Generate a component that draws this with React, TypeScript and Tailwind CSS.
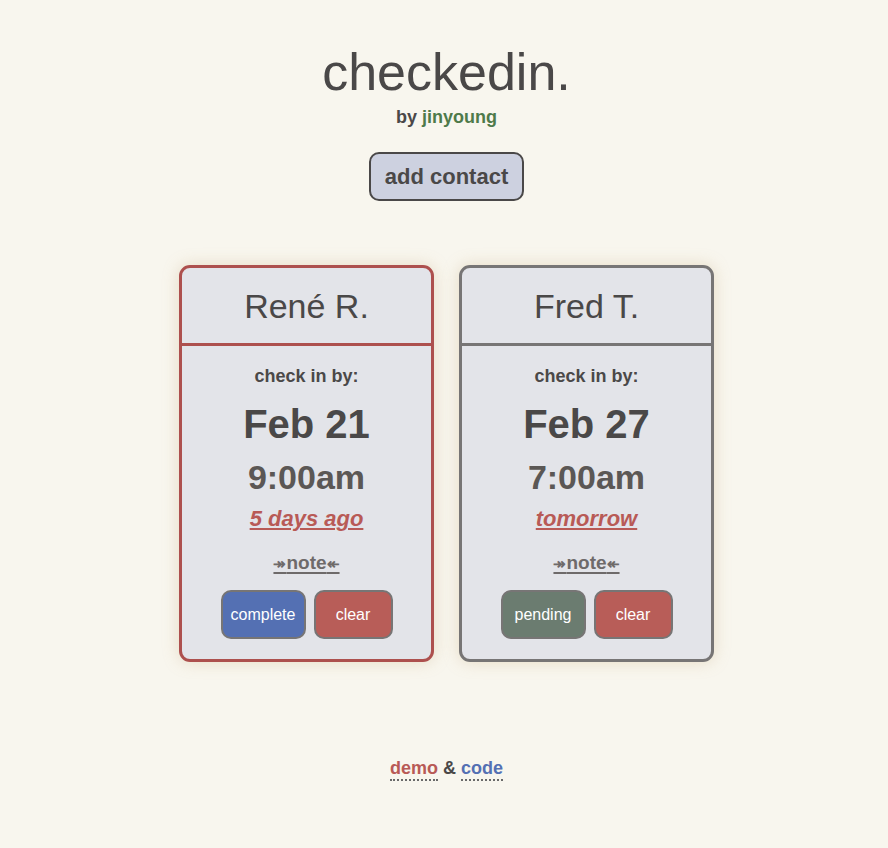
import React from "react";

type Contact = {
  name: string;
  date: string;
  time: string;
  rel: string;
  status: "complete" | "pending";
  border: string;
};

const contacts: Contact[] = [
  { name: "René R.", date: "Feb 21", time: "9:00am", rel: "5 days ago", status: "complete", border: "border-[#ad504e]" },
  { name: "Fred T.", date: "Feb 27", time: "7:00am", rel: "tomorrow", status: "pending", border: "border-[#777575]" },
];

function Card({ c }: { c: Contact }) {
  const divider = c.status === "complete" ? "border-b-[#ad504e]" : "border-b-[#777575]";
  return (
    <div
      className={`w-[255px] rounded-[11px] border-[3px] ${c.border} bg-[#e3e4e9] shadow-[0_0_16px_rgba(200,170,120,0.35)] flex flex-col items-center`}
    >
      <div className={`w-full h-[78px] flex items-center justify-center border-b-[3px] ${divider}`}>
        <span className="text-[34px] leading-[40px] text-[#4a4848]">{c.name}</span>
      </div>
      <div className="mt-[20px] text-[18px] leading-[21px] font-bold text-[#4a4848]">check in by:</div>
      <div className="mt-[14px] text-[40px] leading-[46px] font-bold text-[#4a4848]">{c.date}</div>
      <div className="mt-[10px] text-[34px] leading-[40px] font-bold text-[#5b5755]">{c.time}</div>
      <div className="mt-[9px] text-[22px] leading-[26px] font-bold italic underline decoration-2 underline-offset-[2px] text-[#b85a56]">
        {c.rel}
      </div>
      <div className="mt-[20px] text-[19px] leading-[21px] font-bold underline decoration-2 underline-offset-[3px] text-[#6e6a6a]">
        <span className="text-[15px]">↠</span>note<span className="text-[15px]">↞</span>
      </div>
      <div className="mt-[16px] mb-[20px] flex gap-[8px]">
        <button
          className={`w-[85px] h-[49px] rounded-[10px] border-2 border-[#777575] text-white text-[16px] ${
            c.status === "complete" ? "bg-[#5470b3]" : "bg-[#6b7c70]"
          }`}
        >
          {c.status}
        </button>
        <button className="w-[79px] h-[49px] rounded-[10px] border-2 border-[#777575] bg-[#b85d58] text-white text-[16px]">
          clear
        </button>
      </div>
    </div>
  );
}

export default function App() {
  return (
    <div
      className="min-h-screen w-full bg-[#f8f6ee] flex flex-col items-center pt-[42px] pl-[5px]"
      style={{ fontFamily: '"Liberation Sans", Arial, sans-serif' }}
    >
      <h1 className="text-[52px] leading-[60px] text-[#4a4848]">checkedin.</h1>
      <div className="mt-[5px] text-[18px] leading-[21px] font-bold text-[#4a4848]">
        by <span className="text-[#4e7a4a]">jinyoung</span>
      </div>
      <button className="mt-[24px] h-[49px] px-[14px] rounded-[10px] border-2 border-[#4a4848] bg-[#cdd1e0] text-[22px] leading-[25px] font-bold text-[#4a4848]">
        add contact
      </button>
      <div className="mt-[64px] flex gap-[25px]">
        {contacts.map((c) => (
          <Card key={c.name} c={c} />
        ))}
      </div>
      <div className="mt-[96px] text-[18px] leading-[21px] font-bold text-[#4a4848]">
        <span className="text-[#b85a56] border-b-2 border-dotted border-[#6a6a6a] pb-[1px]">demo</span>
        {" & "}
        <span className="text-[#5470b3] border-b-2 border-dotted border-[#6a6a6a] pb-[1px]">code</span>
      </div>
    </div>
  );
}
